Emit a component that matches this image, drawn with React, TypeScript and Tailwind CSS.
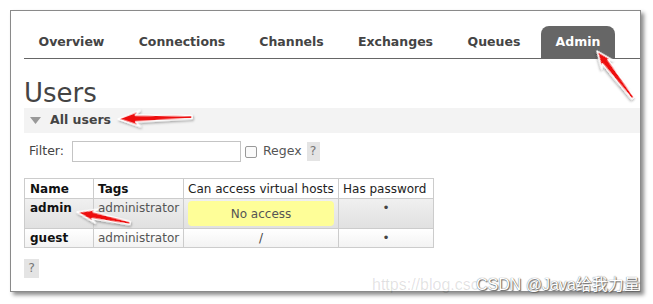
import React from "react";

const tabs = [
  { label: "Overview", w: "w-[95px]" },
  { label: "Connections", w: "w-[114px]" },
  { label: "Channels", w: "w-[93px]" },
  { label: "Exchanges", w: "w-[103px]" },
  { label: "Queues", w: "w-[82px]" },
];

function Arrow({ tip, tail, head = 18, half = 8 }: { tip: [number, number]; tail: [number, number]; head?: number; half?: number }) {
  const dx = tail[0] - tip[0];
  const dy = tail[1] - tip[1];
  const len = Math.sqrt(dx * dx + dy * dy);
  const angle = (Math.atan2(dy, dx) * 180) / Math.PI;
  const n = head * 0.8;
  const pts = `0,0 ${head},${-half} ${n},-3.5 ${len},-1.5 ${len},1.5 ${n},3.5 ${head},${half}`;
  return (
    <g transform={`translate(${tip[0]} ${tip[1]}) rotate(${angle})`}>
      <polygon points={pts} fill="#ee1111" stroke="#fff" strokeWidth="1.5" strokeLinejoin="round" filter="url(#sh)" />
    </g>
  );
}

export default function App() {
  return (
    <div className="relative h-[304px] w-[653px] overflow-hidden bg-white font-['DejaVu_Sans',Verdana,sans-serif] text-[#444]">
      <div className="ml-[10px] mt-[10px] h-[282px] w-[631px] border border-[#8a8a8a] bg-white shadow-[3px_3px_4px_rgba(0,0,0,0.45)]">
        <div className="pl-[13px] pt-[15px]">
          {/* tabs */}
          <div className="flex items-end gap-[6px] border-b border-[#666]">
            {tabs.map((t) => (
              <div key={t.label} className={`flex h-[32px] items-center justify-center text-[12.5px] font-bold text-[#444] ${t.w}`}>
                {t.label}
              </div>
            ))}
            <div className="flex h-[32px] w-[74px] items-center justify-center rounded-t-[8px] bg-[#666] text-[12.5px] font-bold text-white">
              Admin
            </div>
          </div>

          <h1 className="mt-[19px] text-[26px] leading-[30px] text-[#444]">Users</h1>

          <div className="flex h-[25px] items-center bg-[#f3f3f3] pl-[6px]">
            <svg width="11" height="7" viewBox="0 0 11 7" className="mr-[9px]">
              <polygon points="0,0 11,0 5.5,7" fill="#999" />
            </svg>
            <span className="text-[12.5px] font-bold text-[#444]">All users</span>
          </div>

          {/* filter */}
          <div className="mt-[8px] flex h-[21px] items-center pl-[5px] text-[12.5px]">
            <span className="w-[43px] text-[#444]">Filter:</span>
            <div className="h-[21px] w-[169px] border border-[#c4c4c4] bg-white" />
            <div className="ml-[4px] h-[12px] w-[12px] rounded-[2px] border border-[#999] bg-[#fafafa]" />
            <span className="ml-[6px] text-[#555]">Regex</span>
            <span className="ml-[5px] flex h-[19px] w-[13px] items-center justify-center bg-[#e4e4e4] text-[#777]">?</span>
          </div>

          {/* table */}
          <table className="mt-[16px] w-[409px] table-fixed border-collapse whitespace-nowrap text-[12px] leading-[16px]">
            <thead>
              <tr className="h-[20px]">
                <th className="w-[69px] border border-[#ccc] px-[5px] text-left font-bold text-[#111]">Name</th>
                <th className="w-[90px] border border-[#ccc] px-[4px] text-left font-bold text-[#111]">Tags</th>
                <th className="w-[155px] border border-[#ccc] px-[4px] text-left font-normal text-[#222]">Can access virtual hosts</th>
                <th className="w-[95px] border border-[#ccc] px-[4px] text-left font-normal text-[#222]">Has password</th>
              </tr>
            </thead>
            <tbody>
              <tr className="h-[30px] bg-gradient-to-b from-[#f0f0f0] to-[#e0e0e0]">
                <td className="border border-[#ccc] px-[5px] pt-[1px] align-top font-bold text-[#111]">admin</td>
                <td className="border border-[#ccc] px-[4px] pt-[1px] align-top text-[#555]">administrator</td>
                <td className="border border-[#ccc] px-[4px] py-[1px]">
                  <div className="flex h-[25px] items-center justify-center rounded-[4px] bg-[#fefe98] text-[#555]">No access</div>
                </td>
                <td className="border border-[#ccc] pt-[1px] text-center align-top text-[#444]">•</td>
              </tr>
              <tr className="h-[19px] bg-gradient-to-b from-white to-[#f2f2f2]">
                <td className="border border-[#ccc] px-[5px] font-bold text-[#111]">guest</td>
                <td className="border border-[#ccc] px-[4px] text-[#555]">administrator</td>
                <td className="border border-[#ccc] text-center text-[#444]">/</td>
                <td className="border border-[#ccc] text-center text-[#444]">•</td>
              </tr>
            </tbody>
          </table>

          <div className="mt-[11px] flex h-[19px] w-[15px] items-center justify-center bg-[#e4e4e4] text-[12.5px] text-[#777]">?</div>
        </div>
      </div>

      {/* annotation arrows */}
      <svg className="pointer-events-none absolute left-0 top-0" width="653" height="304">
        <defs>
          <filter id="sh" x="-20%" y="-50%" width="140%" height="200%">
            <feDropShadow dx="1" dy="1.5" stdDeviation="1.2" floodColor="#000" floodOpacity="0.35" />
          </filter>
        </defs>
        <Arrow tip={[597, 51]} tail={[633, 98]} head={17} half={7} />
        <Arrow tip={[118, 119]} tail={[192, 117]} head={22} half={8} />
        <Arrow tip={[77, 212]} tail={[130, 223]} head={20} half={7} />
      </svg>

      {/* watermark */}
      <div className="pointer-events-none absolute left-[372px] top-[276px] whitespace-nowrap font-['Liberation_Sans',Arial,sans-serif] text-[16px] leading-[18px] text-[rgba(0,0,0,0.12)]">
        https://blog.csc
      </div>
      <div className="pointer-events-none absolute left-[476px] top-[276px] font-['Liberation_Sans','Noto_Sans_CJK_SC',sans-serif] text-[16px] leading-[18px] text-white [text-shadow:0_0_1px_#555,1px_1px_1px_#666]">
        CSDN @Java给我力量
      </div>
    </div>
  );
}
